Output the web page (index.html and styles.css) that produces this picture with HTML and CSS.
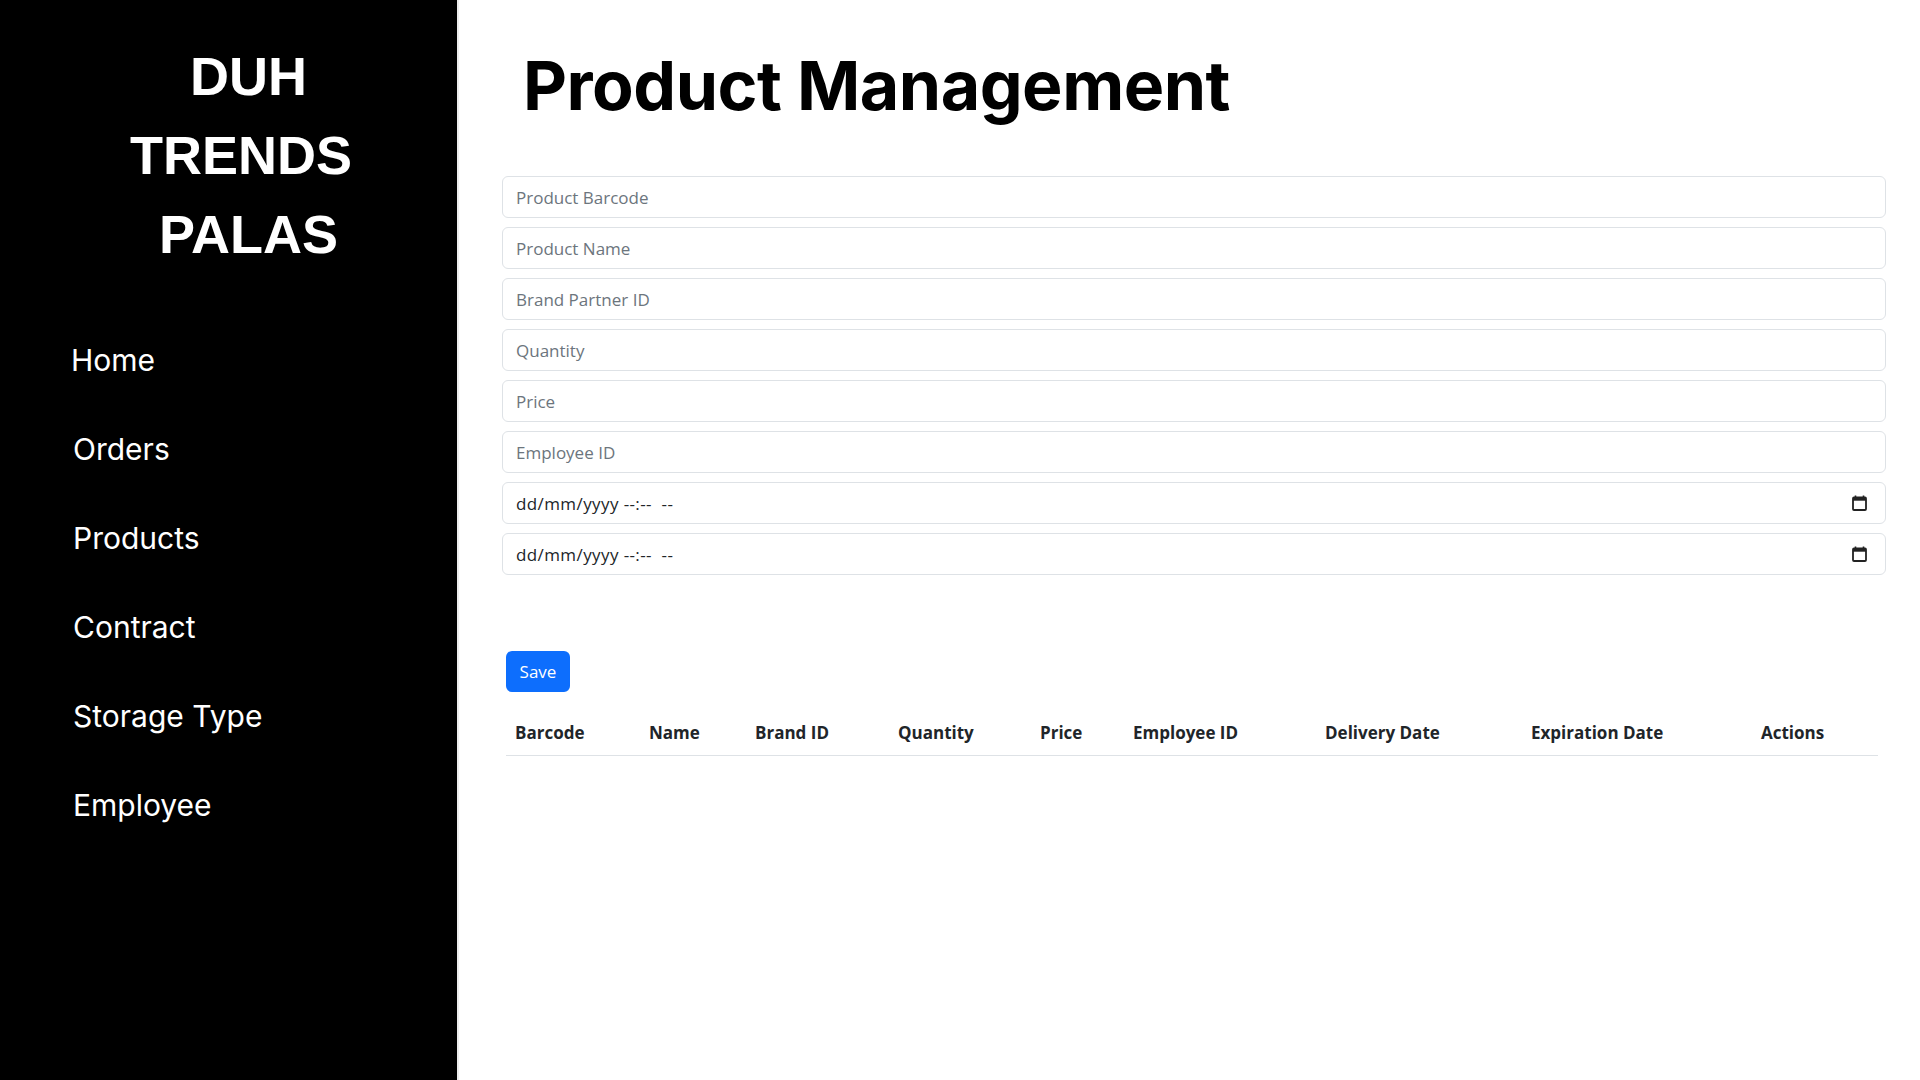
FILE: index.html
```html
<!DOCTYPE html>
<html lang="en">
<head>
<meta charset="utf-8">
<title>Product Management</title>
<link rel="stylesheet" href="styles.css">
</head>
<body>
<div class="app">
  <aside class="sidebar">
    <div class="brand">DUH<br>TRENDS&nbsp;<br>PALAS</div>
    <nav class="nav">
      <a class="nav-item first" href="#">Home</a>
      <a class="nav-item" href="#">Orders</a>
      <a class="nav-item" href="#">Products</a>
      <a class="nav-item" href="#">Contract</a>
      <a class="nav-item" href="#">Storage Type</a>
      <a class="nav-item" href="#">Employee</a>
    </nav>
  </aside>
  <main class="main">
    <h1 class="title">Product Management</h1>
    <form class="form">
      <input class="field" type="text" placeholder="Product Barcode">
      <input class="field" type="text" placeholder="Product Name">
      <input class="field" type="text" placeholder="Brand Partner ID">
      <input class="field" type="text" placeholder="Quantity">
      <input class="field" type="text" placeholder="Price">
      <input class="field" type="text" placeholder="Employee ID">
      <div class="field date"><span>dd/mm/yyyy --:-- &nbsp;--</span><svg class="cal" width="15" height="16" viewBox="0 0 15 16"><path d="M3.5 0.5v2.5M11.5 0.5v2.5" stroke="#222" stroke-width="1.6" fill="none"/><rect x="1" y="2.5" width="13" height="12.5" rx="1" fill="none" stroke="#222" stroke-width="1.8"/><rect x="1" y="2.5" width="13" height="3.2" fill="#222"/></svg></div>
      <div class="field date"><span>dd/mm/yyyy --:-- &nbsp;--</span><svg class="cal" width="15" height="16" viewBox="0 0 15 16"><path d="M3.5 0.5v2.5M11.5 0.5v2.5" stroke="#222" stroke-width="1.6" fill="none"/><rect x="1" y="2.5" width="13" height="12.5" rx="1" fill="none" stroke="#222" stroke-width="1.8"/><rect x="1" y="2.5" width="13" height="3.2" fill="#222"/></svg></div>
      <button class="btn" type="button">Save</button>
    </form>
    <table class="table">
      <colgroup>
        <col class="c1"><col class="c2"><col class="c3"><col class="c4"><col class="c5"><col class="c6"><col class="c7"><col class="c8"><col class="c9">
      </colgroup>
      <thead>
        <tr>
          <th>Barcode</th><th>Name</th><th>Brand ID</th><th>Quantity</th><th>Price</th><th>Employee ID</th><th>Delivery Date</th><th>Expiration Date</th><th>Actions</th>
        </tr>
      </thead>
      <tbody></tbody>
    </table>
  </main>
</div>
</body>
</html>
```
FILE: styles.css
```css
* { box-sizing: border-box; }
html, body { margin: 0; padding: 0; height: 100%; }
body { background: #fff; font-family: "Open Sans", "Noto Sans", sans-serif; color: #212529; }

.app { display: flex; min-height: 1080px; }

.sidebar {
  width: 457px;
  flex: 0 0 457px;
  background: #000;
  color: #fff;
  padding: 37px 0 0 40px;
}
.brand {
  font-family: "Liberation Sans", Arial, sans-serif;
  font-weight: 700;
  font-size: 54px;
  line-height: 79px;
  text-align: center;
}
.nav { display: flex; flex-direction: column; margin-top: 66px; }
.nav-item {
  font-family: "Inter", sans-serif;
  font-size: 30px;
  line-height: 40px;
  height: 89px;
  color: #fff;
  text-decoration: none;
  padding-left: 33px;
}
.nav-item.first { padding-left: 31px; }

.main {
  flex: 1;
  padding: 0 34px 0 43px;
  border-left: 2px solid #ececec;
}
.title {
  font-family: "Inter", sans-serif;
  font-weight: 700;
  font-size: 68px;
  letter-spacing: -0.5px;
  line-height: 80px;
  margin: 45px 0 0 21px;
  color: #000;
}
.form { display: flex; flex-direction: column; margin-top: 51px; }
.field {
  height: 42px;
  margin-bottom: 9px;
  border: 1px solid #dee2e6;
  border-radius: 6px;
  padding: 0 13px;
  font-family: "Open Sans", sans-serif;
  font-size: 17px;
  color: #212529;
  background: #fff;
  outline: none;
}
.field::placeholder { color: #6c757d; }
.date { display: flex; align-items: center; justify-content: space-between; padding-right: 18px; }
.date span { color: #212529; letter-spacing: 0.4px; }
.cal { display: block; }

.btn {
  align-self: flex-start;
  margin: 67px 0 0 4px;
  width: 64px;
  height: 41px;
  border: none;
  border-radius: 6px;
  background: #0d6efd;
  color: #fff;
  font-family: "Open Sans", sans-serif;
  font-size: 17px;
  padding: 0;
}
.table {
  margin: 16px 0 0 4px;
  width: 1372px;
  border-collapse: collapse;
  table-layout: fixed;
}
.table th {
  text-align: left;
  font-family: "Open Sans", sans-serif;
  font-weight: 700;
  font-size: 17px;
  line-height: 26px;
  padding: 12px 9px 9px;
  color: #212529;
  border-bottom: 1px solid #dee2e6;
  white-space: nowrap;
}
.c1 { width: 134px; }
.c2 { width: 106px; }
.c3 { width: 143px; }
.c4 { width: 142px; }
.c5 { width: 93px; }
.c6 { width: 192px; }
.c7 { width: 206px; }
.c8 { width: 230px; }
.c9 { width: 126px; }
```
